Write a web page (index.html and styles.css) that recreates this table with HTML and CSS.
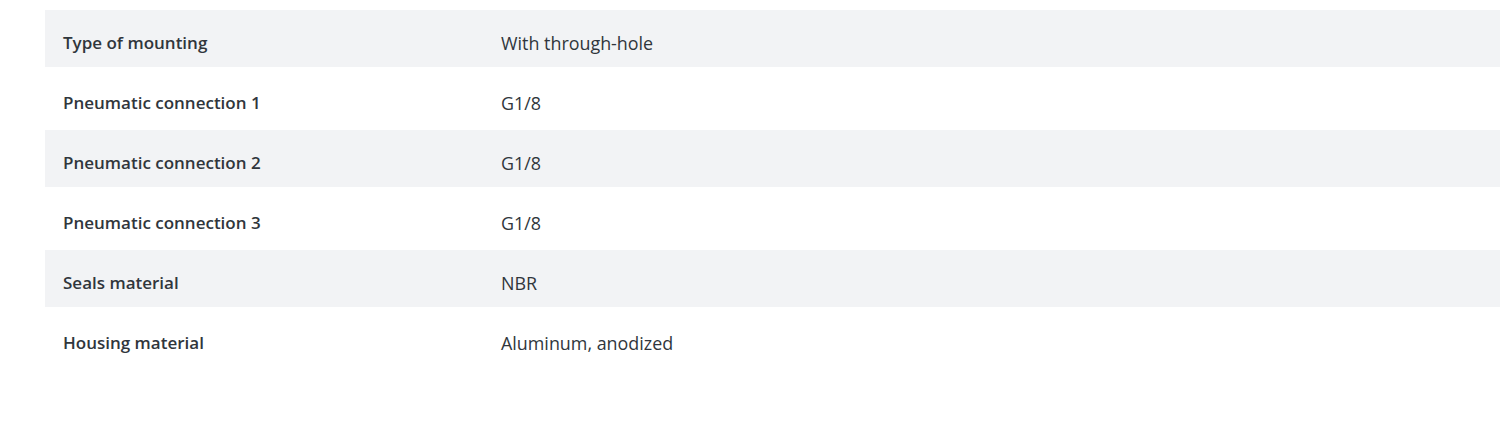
FILE: index.html
```html
<!DOCTYPE html>
<html lang="en">
<head>
<meta charset="utf-8">
<title>Technical data</title>
<link rel="stylesheet" href="styles.css">
</head>
<body>
<div class="specs">
  <div class="row shaded"><div class="label">Type of mounting</div><div class="value">With through-hole</div></div>
  <div class="row"><div class="label">Pneumatic connection 1</div><div class="value">G1/8</div></div>
  <div class="row shaded"><div class="label">Pneumatic connection 2</div><div class="value">G1/8</div></div>
  <div class="row"><div class="label">Pneumatic connection 3</div><div class="value">G1/8</div></div>
  <div class="row shaded"><div class="label">Seals material</div><div class="value">NBR</div></div>
  <div class="row"><div class="label">Housing material</div><div class="value">Aluminum, anodized</div></div>
</div>
</body>
</html>
```
FILE: styles.css
```css
html, body {
  margin: 0;
  padding: 0;
  background: #ffffff;
}
body {
  padding: 10px 0 0 45px;
  font-family: "Open Sans", "Noto Sans", sans-serif;
  color: #30363c;
}
.specs {
  display: flex;
  flex-direction: column;
}
.row {
  display: grid;
  grid-template-columns: 438px 1fr;
  height: 60px;
  box-sizing: border-box;
  padding: 22px 0 0 18px;
  line-height: 22px;
}
.row.shaded {
  background: linear-gradient(#f2f3f5, #f2f3f5) top / 100% 57px no-repeat;
}
.label {
  font-weight: 650;
  font-size: 17px;
}
.value {
  font-weight: 400;
  font-size: 17.9px;
}
```
